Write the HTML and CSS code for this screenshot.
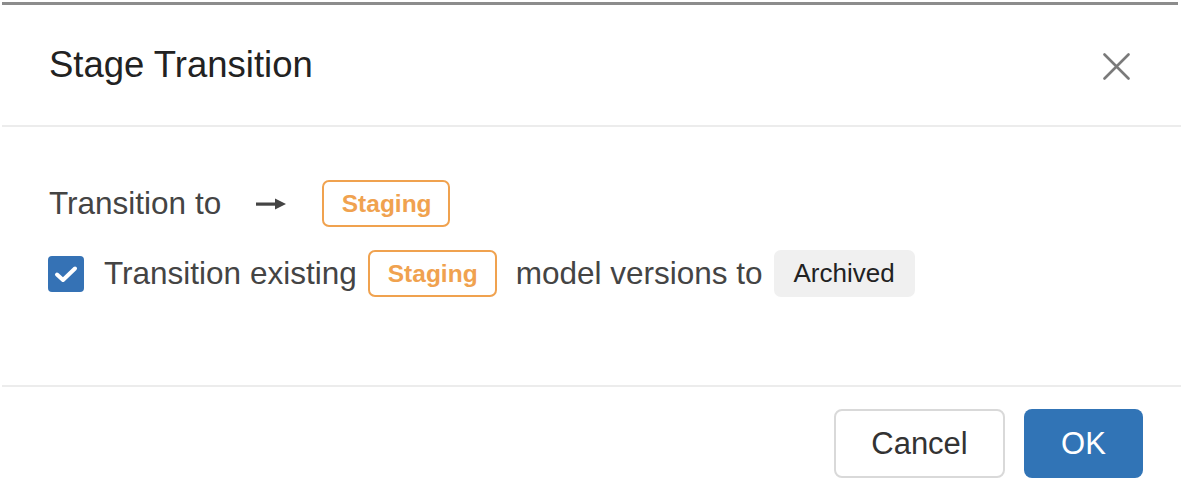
FILE: index.html
```html
<!DOCTYPE html>
<html lang="en">
<head>
<meta charset="utf-8">
<title>Stage Transition</title>
<link rel="stylesheet" href="styles.css">
</head>
<body>
<div class="page">
  <div class="topline"></div>
  <div class="modal">
    <div class="modal-header">
      <h1 class="modal-title">Stage Transition</h1>
      <button class="close" aria-label="Close">
        <svg width="27" height="27" viewBox="0 0 27 27"><path d="M1.5 1.5 L25.5 25.5 M25.5 1.5 L1.5 25.5" stroke="#7a7a7a" stroke-width="2.6" stroke-linecap="round" fill="none"/></svg>
      </button>
    </div>
    <div class="modal-body">
      <div class="row">
        <span class="label">Transition to</span>
        <svg class="arrow" width="30" height="14" viewBox="0 0 30 14"><rect x="0" y="5.5" width="22" height="3.2" fill="#444"/><polygon points="19,1.5 30,7 19,12.5" fill="#444"/></svg>
        <span class="tag tag-staging">Staging</span>
      </div>
      <div class="row row-check">
        <span class="checkbox">
          <svg width="36" height="36" viewBox="0 0 36 36"><rect x="0" y="0" width="36" height="36" rx="4" fill="#3572b5"/><path d="M9 18.5 L15 24 L27 12.5" stroke="#fff" stroke-width="4" fill="none" stroke-linecap="round" stroke-linejoin="round"/></svg>
        </span>
        <span class="label label-check">Transition existing</span>
        <span class="tag tag-staging tag-inline">Staging</span>
        <span class="label label-mid">model versions to</span>
        <span class="tag tag-archived">Archived</span>
      </div>
    </div>
    <div class="modal-footer">
      <button class="btn btn-default">Cancel</button>
      <button class="btn btn-primary">OK</button>
    </div>
  </div>
</div>
</body>
</html>
```

FILE: styles.css
```css
* { box-sizing: border-box; }
html, body {
  margin: 0;
  padding: 0;
  background: #ffffff;
  font-family: "Liberation Sans", Arial, Helvetica, sans-serif;
}
.page {
  width: 1181px;
  height: 483px;
  overflow: hidden;
  padding-top: 2px;
}
.topline {
  height: 3px;
  margin: 0 3px 0 2px;
  background: #8c8c8c;
}
.modal {
  margin-left: 2px;
}
.modal-header {
  height: 122px;
  display: flex;
  align-items: center;
  justify-content: space-between;
  padding: 0 51px 0 47px;
  border-bottom: 2px solid #ececec;
}
.modal-title {
  margin: 0;
  font-size: 36.5px;
  font-weight: normal;
  color: #222;
  padding-top: 0;
}
.close {
  border: 0;
  background: none;
  padding: 0;
  margin-top: 2px;
  display: flex;
}
.modal-body {
  height: 260px;
  padding: 53px 0 0 47px;
  border-bottom: 2px solid #ececec;
  display: flex;
  flex-direction: column;
  gap: 23px;
}
.row {
  display: flex;
  align-items: center;
  height: 47px;
}
.label {
  font-size: 31.5px;
  color: #444;
}
.arrow {
  margin: 0 36px 0 35px;
}
.tag {
  display: inline-flex;
  align-items: center;
  height: 47px;
  border-radius: 7px;
  font-size: 24.5px;
}
.tag-staging {
  border: 2px solid #f0a24f;
  color: #f0a24f;
  font-weight: bold;
  padding: 0 16px 0 17px;
  width: 128px;
  justify-content: center;
}
.row-check .checkbox {
  display: flex;
  margin: 0 20px 0 -1px;
}
.tag-inline {
  margin-left: 11px;
  width: 129px;
}
.label-mid {
  margin: 0 11px 0 19px;
}
.tag-archived {
  background: #f0f0f0;
  color: #222;
  font-size: 26px;
  padding: 0 17px;
  width: 141px;
  justify-content: center;
}
.modal-footer {
  display: flex;
  justify-content: flex-end;
  gap: 19px;
  padding: 22px 38px 0 0;
}
.btn {
  height: 69px;
  border-radius: 8px;
  font-family: "Liberation Sans", Arial, Helvetica, sans-serif;
  font-size: 31px;
  padding: 0;
}
.btn-default {
  width: 171px;
  background: #fff;
  border: 2px solid #d9d9d9;
  color: #333;
}
.btn-primary {
  width: 119px;
  background: #3174b6;
  border: 0;
  color: #fff;
}
```
